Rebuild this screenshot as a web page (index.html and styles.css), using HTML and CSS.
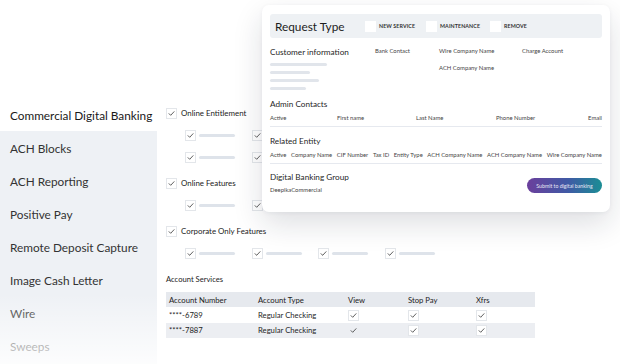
FILE: index.html
```html
<!DOCTYPE html>
<html>
<head>
<meta charset="utf-8">
<link rel="stylesheet" href="styles.css">
</head>
<body>
<div class="page">
  <aside class="sidebar">
    <div class="nav-item active">Commercial Digital Banking</div>
    <div class="nav-list">
      <div class="nav-item">ACH Blocks</div>
      <div class="nav-item">ACH Reporting</div>
      <div class="nav-item">Positive Pay</div>
      <div class="nav-item">Remote Deposit Capture</div>
      <div class="nav-item">Image Cash Letter</div>
      <div class="nav-item">Wire</div>
      <div class="nav-item">Sweeps</div>
    </div>
    <div class="fade"></div>
  </aside>

  <main class="main">
    <div class="group">
      <div class="parent"><span class="cb"><svg viewBox="0 0 10 10"><path d="M2.3 5.2 L4.1 7 L7.8 3"/></svg></span>Online Entitlement</div>
      <div class="subs">
        <div class="sub"><span class="cb"><svg viewBox="0 0 10 10"><path d="M2.3 5.2 L4.1 7 L7.8 3"/></svg></span><span class="bar"></span></div>
        <div class="sub"><span class="cb"><svg viewBox="0 0 10 10"><path d="M2.3 5.2 L4.1 7 L7.8 3"/></svg></span><span class="bar"></span></div>
      </div>
      <div class="subs">
        <div class="sub"><span class="cb"><svg viewBox="0 0 10 10"><path d="M2.3 5.2 L4.1 7 L7.8 3"/></svg></span><span class="bar"></span></div>
        <div class="sub"><span class="cb"><svg viewBox="0 0 10 10"><path d="M2.3 5.2 L4.1 7 L7.8 3"/></svg></span><span class="bar"></span></div>
      </div>
    </div>
    <div class="group">
      <div class="parent"><span class="cb"><svg viewBox="0 0 10 10"><path d="M2.3 5.2 L4.1 7 L7.8 3"/></svg></span>Online Features</div>
      <div class="subs">
        <div class="sub"><span class="cb"><svg viewBox="0 0 10 10"><path d="M2.3 5.2 L4.1 7 L7.8 3"/></svg></span><span class="bar"></span></div>
        <div class="sub"><span class="cb"><svg viewBox="0 0 10 10"><path d="M2.3 5.2 L4.1 7 L7.8 3"/></svg></span><span class="bar"></span></div>
      </div>
    </div>
    <div class="group">
      <div class="parent"><span class="cb"><svg viewBox="0 0 10 10"><path d="M2.3 5.2 L4.1 7 L7.8 3"/></svg></span>Corporate Only Features</div>
      <div class="subs">
        <div class="sub"><span class="cb"><svg viewBox="0 0 10 10"><path d="M2.3 5.2 L4.1 7 L7.8 3"/></svg></span><span class="bar"></span></div>
        <div class="sub"><span class="cb"><svg viewBox="0 0 10 10"><path d="M2.3 5.2 L4.1 7 L7.8 3"/></svg></span><span class="bar"></span></div>
        <div class="sub"><span class="cb"><svg viewBox="0 0 10 10"><path d="M2.3 5.2 L4.1 7 L7.8 3"/></svg></span><span class="bar"></span></div>
        <div class="sub"><span class="cb"><svg viewBox="0 0 10 10"><path d="M2.3 5.2 L4.1 7 L7.8 3"/></svg></span><span class="bar"></span></div>
      </div>
    </div>

    <div class="acct-title">Account Services</div>
    <table class="acct">
      <thead>
        <tr><th>Account Number</th><th>Account Type</th><th>View</th><th>Stop Pay</th><th>Xfrs</th></tr>
      </thead>
      <tbody>
        <tr>
          <td>****-6789</td><td>Regular Checking</td>
          <td><span class="cb"><svg viewBox="0 0 10 10"><path d="M2.3 5.2 L4.1 7 L7.8 3"/></svg></span></td>
          <td><span class="cb"><svg viewBox="0 0 10 10"><path d="M2.3 5.2 L4.1 7 L7.8 3"/></svg></span></td>
          <td><span class="cb"><svg viewBox="0 0 10 10"><path d="M2.3 5.2 L4.1 7 L7.8 3"/></svg></span></td>
        </tr>
        <tr class="alt">
          <td>****-7887</td><td>Regular Checking</td>
          <td><span class="cb plain"><svg viewBox="0 0 10 10"><path d="M2.3 5.2 L4.1 7 L7.8 3"/></svg></span></td>
          <td><span class="cb"><svg viewBox="0 0 10 10"><path d="M2.3 5.2 L4.1 7 L7.8 3"/></svg></span></td>
          <td><span class="cb"><svg viewBox="0 0 10 10"><path d="M2.3 5.2 L4.1 7 L7.8 3"/></svg></span></td>
        </tr>
      </tbody>
    </table>
  </main>

  <section class="card">
    <div class="req-bar">
      <div class="req-title">Request Type</div>
      <div class="req-opt o1"><span class="box"></span>NEW SERVICE</div>
      <div class="req-opt o2"><span class="box"></span>MAINTENANCE</div>
      <div class="req-opt"><span class="box"></span>REMOVE</div>
    </div>

    <div class="cust">
      <div class="cust-left">
        <div class="h">Customer information</div>
        <div class="lines">
          <span class="ln w1"></span>
          <span class="ln w2"></span>
          <span class="ln w3"></span>
          <span class="ln w4"></span>
        </div>
      </div>
      <div class="cust-col c1"><div class="lbl">Bank Contact</div></div>
      <div class="cust-col c2"><div class="lbl">Wire Company Name</div><div class="lbl">ACH Company Name</div></div>
      <div class="cust-col c3"><div class="lbl">Charge Account</div></div>
    </div>

    <div class="sec">
      <div class="h">Admin Contacts</div>
      <div class="admin-row">
        <span class="lbl">Active</span>
        <span class="lbl">First name</span>
        <span class="lbl">Last Name</span>
        <span class="lbl">Phone Number</span>
        <span class="lbl">Email</span>
      </div>
    </div>

    <div class="sec">
      <div class="h">Related Entity</div>
      <div class="entity-row">
        <span class="lbl">Active</span>
        <span class="lbl">Company Name</span>
        <span class="lbl">CIF Number</span>
        <span class="lbl">Tax ID</span>
        <span class="lbl">Entity Type</span>
        <span class="lbl">ACH Company Name</span>
        <span class="lbl">ACH Company Name</span>
        <span class="lbl">Wire Company Name</span>
      </div>
    </div>

    <div class="dbg">
      <div>
        <div class="h">Digital Banking Group</div>
        <div class="lbl dk">DeepikaCommercial</div>
      </div>
      <button class="submit">Submit to digital banking</button>
    </div>
  </section>
</div>
</body>
</html>
```

FILE: styles.css
```css
* { box-sizing: border-box; }
html, body { margin: 0; padding: 0; background: #fff; }
body {
  font-family: Lato, "Noto Sans", sans-serif;
  color: #262626;
  width: 620px;
  height: 364px;
  overflow: hidden;
}
.page {
  position: relative;
  display: flex;
  width: 620px;
  height: 364px;
}

/* Sidebar */
.sidebar {
  position: relative;
  width: 157px;
  padding-top: 100px;
  display: flex;
  flex-direction: column;
  flex-shrink: 0;
}
.nav-item {
  height: 33px;
  line-height: 33px;
  padding-left: 10px;
  font-size: 11.8px;
  color: #333;
  white-space: nowrap;
}
.nav-item.active {
  height: 31px;
  line-height: 31px;
  color: #1a1a1a;
}
.nav-list {
  flex: 1;
  background: #eef1f5;
  padding-top: 1px;
}
.fade {
  position: absolute;
  left: 0; right: 0; bottom: 0;
  height: 70px;
  background: linear-gradient(to bottom, rgba(255,255,255,0), rgba(255,255,255,0.85));
}

/* Main */
.main {
  padding: 107px 0 0 9px;
  display: flex;
  flex-direction: column;
  gap: 14px;
  flex: 1;
}
.group { display: flex; flex-direction: column; gap: 10px; }
.parent {
  display: flex;
  align-items: center;
  gap: 4px;
  height: 12px;
  font-size: 7.9px;
  color: #222;
}
.subs {
  display: flex;
  padding-left: 19px;
  height: 12px;
}
.sub {
  width: 66.6px;
  display: flex;
  align-items: center;
  gap: 3px;
}
.bar {
  width: 36px;
  height: 3px;
  border-radius: 2px;
  background: #dee3ea;
}
.cb {
  width: 11px;
  height: 11px;
  background: #fff;
  border: 1px solid #e3e6ea;
  display: inline-flex;
  align-items: center;
  justify-content: center;
  flex-shrink: 0;
}
.cb.plain { border-color: transparent; background: transparent; }
.cb svg { width: 9px; height: 9px; }
.cb path { fill: none; stroke: #3a3a3a; stroke-width: 0.9; stroke-linecap: round; stroke-linejoin: round; }

.acct-title {
  margin-top: 1px;
  font-size: 7.6px;
  color: #222;
  height: 10px;
  line-height: 10px;
}
.acct {
  margin-top: -6px;
  width: 369px;
  border-collapse: collapse;
  font-size: 7.7px;
  color: #1f1f1f;
}
.acct th, .acct td {
  text-align: left;
  padding: 0 0 0 3px;
  height: 15.5px;
  font-weight: 400;
  vertical-align: middle;
}
.acct th { background: #e6e9ee; color: #222; height: 15px; }
.acct th:nth-child(1) { width: 89px; }
.acct th:nth-child(2) { width: 90px; }
.acct th:nth-child(3) { width: 60px; }
.acct th:nth-child(4) { width: 68px; }
.acct td .cb { vertical-align: middle; margin-left: 0; }
.acct tr.alt td { background: #eceef2; }

/* Floating card */
.card {
  position: absolute;
  left: 262px;
  top: 5px;
  width: 348px;
  height: 207px;
  background: #fff;
  border-radius: 7px;
  box-shadow: 0 12px 30px rgba(20, 30, 50, 0.14), 0 1px 4px rgba(20,30,50,0.05);
  padding: 9px 8px 0 8px;
  display: flex;
  flex-direction: column;
}
.req-bar {
  height: 24px;
  background: #eef1f4;
  border-radius: 3px;
  display: flex;
  align-items: center;
  padding-left: 5px;
  flex-shrink: 0;
}
.req-title {
  font-size: 11.8px;
  color: #1c1c1c;
  width: 90px;
}
.req-opt {
  display: flex;
  align-items: center;
  font-size: 5.3px;
  font-weight: 700;
  letter-spacing: 0.1px;
  color: #333;
}
.req-opt.o1 { width: 61px; }
.req-opt.o2 { width: 64px; }
.req-opt .box {
  width: 11px;
  height: 11px;
  background: #fff;
  margin-right: 3px;
}
.h {
  font-size: 8.2px;
  color: #1f1f1f;
  line-height: 10px;
  height: 10px;
}
.lbl {
  font-size: 5.9px;
  color: #444;
  line-height: 8px;
  height: 8px;
  white-space: nowrap;
}
.cust {
  display: flex;
  margin-top: 9px;
  flex-shrink: 0;
}
.cust-left { width: 105px; }
.lines {
  margin-top: 6px;
  display: flex;
  flex-direction: column;
  gap: 5px;
}
.ln { height: 3px; border-radius: 2px; background: #e1e5eb; display: block; }
.ln.w1 { width: 57px; }
.ln.w2 { width: 40px; }
.ln.w3 { width: 49px; }
.ln.w4 { width: 36px; }
.cust-col { display: flex; flex-direction: column; gap: 9px; }
.cust-col.c1 { width: 64px; }
.cust-col.c2 { width: 83px; }

.sec {
  margin-top: 9px;
  border-bottom: 1px solid #e6e9ef;
  padding-bottom: 4px;
  flex-shrink: 0;
}
.sec .h { margin-bottom: 5px; }
.admin-row {
  display: grid;
  grid-template-columns: 67px 79px 80px 1fr auto;
}
.entity-row {
  display: flex;
  justify-content: space-between;
}
.dbg {
  margin-top: 8px;
  display: flex;
  justify-content: space-between;
  align-items: flex-start;
}
.dbg .dk { margin-top: 4px; }
.submit {
  margin-top: 6px;
  width: 75px;
  height: 15px;
  border: none;
  border-radius: 8px;
  background: linear-gradient(90deg, #6b3f9c 0%, #3f5aa5 55%, #1b8e95 100%);
  color: #e9e8f6;
  font-family: Lato, sans-serif;
  font-size: 5.2px;
  padding: 0;
}
```
